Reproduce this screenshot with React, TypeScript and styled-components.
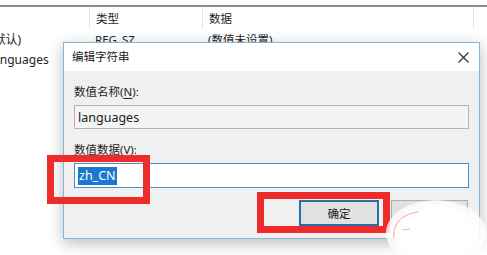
import styled, { createGlobalStyle } from 'styled-components';

const GlobalStyle = createGlobalStyle`
	html, body {
		margin: 0;
		padding: 0;
		background: #ffffff;
	}
	body {
		font-family: 'Noto Sans', 'Noto Sans CJK SC', sans-serif;
		color: #1e1e1e;
	}
`;

const columns = ['类型', '数据'];

const rows = [
	{ name: '(默认)', type: 'REG_SZ', data: '(数值未设置)' },
	{ name: 'languages', type: '', data: '' },
];

const App = () => {
	return (
		<>
			<GlobalStyle />
			<Screen>
				<ValueList>
					<TopRule />
					<HeaderRow>
						<HeaderCell />
						{columns.map(col => (
							<HeaderCell key={col}>{col}</HeaderCell>
						))}
						<HeaderCell />
					</HeaderRow>
					{rows.map(row => (
						<Row key={row.name}>
							<NameCell>{row.name}</NameCell>
							<Cell>{row.type}</Cell>
							<Cell>{row.data}</Cell>
						</Row>
					))}
				</ValueList>

				<Dialog>
					<TitleBar>
						<Title>编辑字符串</Title>
						<CloseButton aria-label='关闭'>
							<svg width='11' height='11' viewBox='0 0 11 11'>
								<path
									d='M0.5 0.5 L10.5 10.5 M10.5 0.5 L0.5 10.5'
									stroke='#2b2b2b'
									strokeWidth='1.1'
								/>
							</svg>
						</CloseButton>
					</TitleBar>
					<Body>
						<Label>
							数值名称(<u>N</u>):
						</Label>
						<Field $readOnly>languages</Field>
						<Label $gap>
							数值数据(<u>V</u>):
						</Label>
						<Field>
							<Selected>zh_CN</Selected>
						</Field>
						<Buttons>
							<Button $primary>确定</Button>
							<Button $width={77} $faded>
								取消
							</Button>
						</Buttons>
					</Body>
				</Dialog>

				<Marker $left={47} $top={155} $width={103} $height={49} />
				<Marker $left={257} $top={192} $width={133} $height={41} />

				<Smudge>
					<svg width='40' height='40' viewBox='0 0 40 40'>
						<path
							d='M4 34 C2 20 12 10 28 8'
							stroke='#f3a0a0'
							strokeWidth='1'
							fill='none'
						/>
						<path d='M12 26 L20 25' stroke='#f0b0b0' strokeWidth='1' />
					</svg>
				</Smudge>
			</Screen>
		</>
	);
};

const Screen = styled.div`
	position: relative;
	width: 487px;
	height: 255px;
	overflow: hidden;
	background: #ffffff;
`;

const ValueList = styled.div`
	padding-top: 5px;
	font-size: 11.5px;
`;

const TopRule = styled.div`
	height: 2px;
	background: #8c8c8c;
`;

const HeaderRow = styled.div`
	display: grid;
	grid-template-columns: 89px 113px 271px 1fr;
	height: 22px;
`;

const HeaderCell = styled.div`
	display: flex;
	align-items: center;
	padding-left: 6px;
	border-left: 1px solid #e5e5e5;
	color: #1e1e1e;
	&:first-child {
		border-left: none;
	}
`;

const Row = styled.div`
	display: grid;
	grid-template-columns: 89px 113px 1fr;
	height: 20px;
	align-items: center;
`;

const Cell = styled.div`
	padding-left: 6px;
	white-space: nowrap;
	overflow: hidden;
`;

const NameCell = styled.div`
	white-space: nowrap;
	margin-left: -10px;
	font-size: 12px;
`;

const Dialog = styled.div`
	position: absolute;
	left: 63px;
	top: 42px;
	width: 415px;
	height: 195px;
	display: flex;
	flex-direction: column;
	border: 1px solid #86b6d8;
	background: #f0f0f0;
	box-shadow: 0 4px 14px rgba(0, 0, 0, 0.28);
`;

const TitleBar = styled.div`
	display: flex;
	align-items: center;
	justify-content: space-between;
	height: 28px;
	padding: 0 10px 2px 8px;
	box-sizing: border-box;
	background: #ffffff;
`;

const Title = styled.div`
	font-size: 11.5px;
	color: #1a1a1a;
`;

const CloseButton = styled.div`
	display: flex;
	align-items: center;
	justify-content: center;
	width: 11px;
	height: 11px;
	margin-top: 2px;
`;

const Body = styled.div`
	flex: 1;
	display: flex;
	flex-direction: column;
	padding: 13px 10px 0 10px;
	font-size: 11.5px;
`;

const Label = styled.div<{ $gap?: boolean }>`
	height: 16px;
	line-height: 16px;
	margin-top: ${p => (p.$gap ? '13px' : '0')};
	margin-bottom: 5px;
	color: #1e1e1e;

	u {
		text-underline-offset: 2px;
	}
`;

const Field = styled.div<{ $readOnly?: boolean }>`
	display: flex;
	align-items: center;
	height: ${p => (p.$readOnly ? '22px' : '23px')};
	padding-left: 3px;
	border: 1px solid ${p => (p.$readOnly ? '#b4b4b4' : '#4a8fc6')};
	background: ${p => (p.$readOnly ? '#f4f4f4' : '#ffffff')};
	font-size: 12.5px;
	color: #1a1a1a;
`;

const Selected = styled.span`
	background: #1a78d2;
	color: #ffffff;
	padding: 0 1px;
	line-height: 18px;
`;

const Buttons = styled.div`
	display: flex;
	justify-content: flex-end;
	gap: 12px;
	margin-top: 12px;
	margin-right: 1px;
`;

const Button = styled.div<{
	$primary?: boolean;
	$width?: number;
	$faded?: boolean;
}>`
	display: flex;
	align-items: center;
	justify-content: center;
	box-sizing: border-box;
	width: ${p => p.$width ?? 80}px;
	height: 26px;
	background: #e1e1e1;
	border: ${p => (p.$primary ? '2px solid #2a6ea6' : '1px solid #adadad')};
	font-size: 11.5px;
	color: ${p => (p.$faded ? '#9a9a9a' : '#1a1a1a')};
`;

const Marker = styled.div<{
	$left: number;
	$top: number;
	$width: number;
	$height: number;
}>`
	position: absolute;
	left: ${p => p.$left}px;
	top: ${p => p.$top}px;
	width: ${p => p.$width}px;
	height: ${p => p.$height}px;
	box-sizing: border-box;
	border: 7px solid #ee2c2c;
`;

const Smudge = styled.div`
	position: absolute;
	left: 386px;
	top: 200px;
	width: 100px;
	height: 66px;
	border-radius: 50%;
	background: radial-gradient(
		ellipse at center,
		rgba(255, 255, 255, 1) 50%,
		rgba(255, 255, 255, 0.8) 70%,
		rgba(255, 255, 255, 0) 100%
	);

	svg {
		position: absolute;
		left: 4px;
		top: 4px;
	}
`;

export default App;
